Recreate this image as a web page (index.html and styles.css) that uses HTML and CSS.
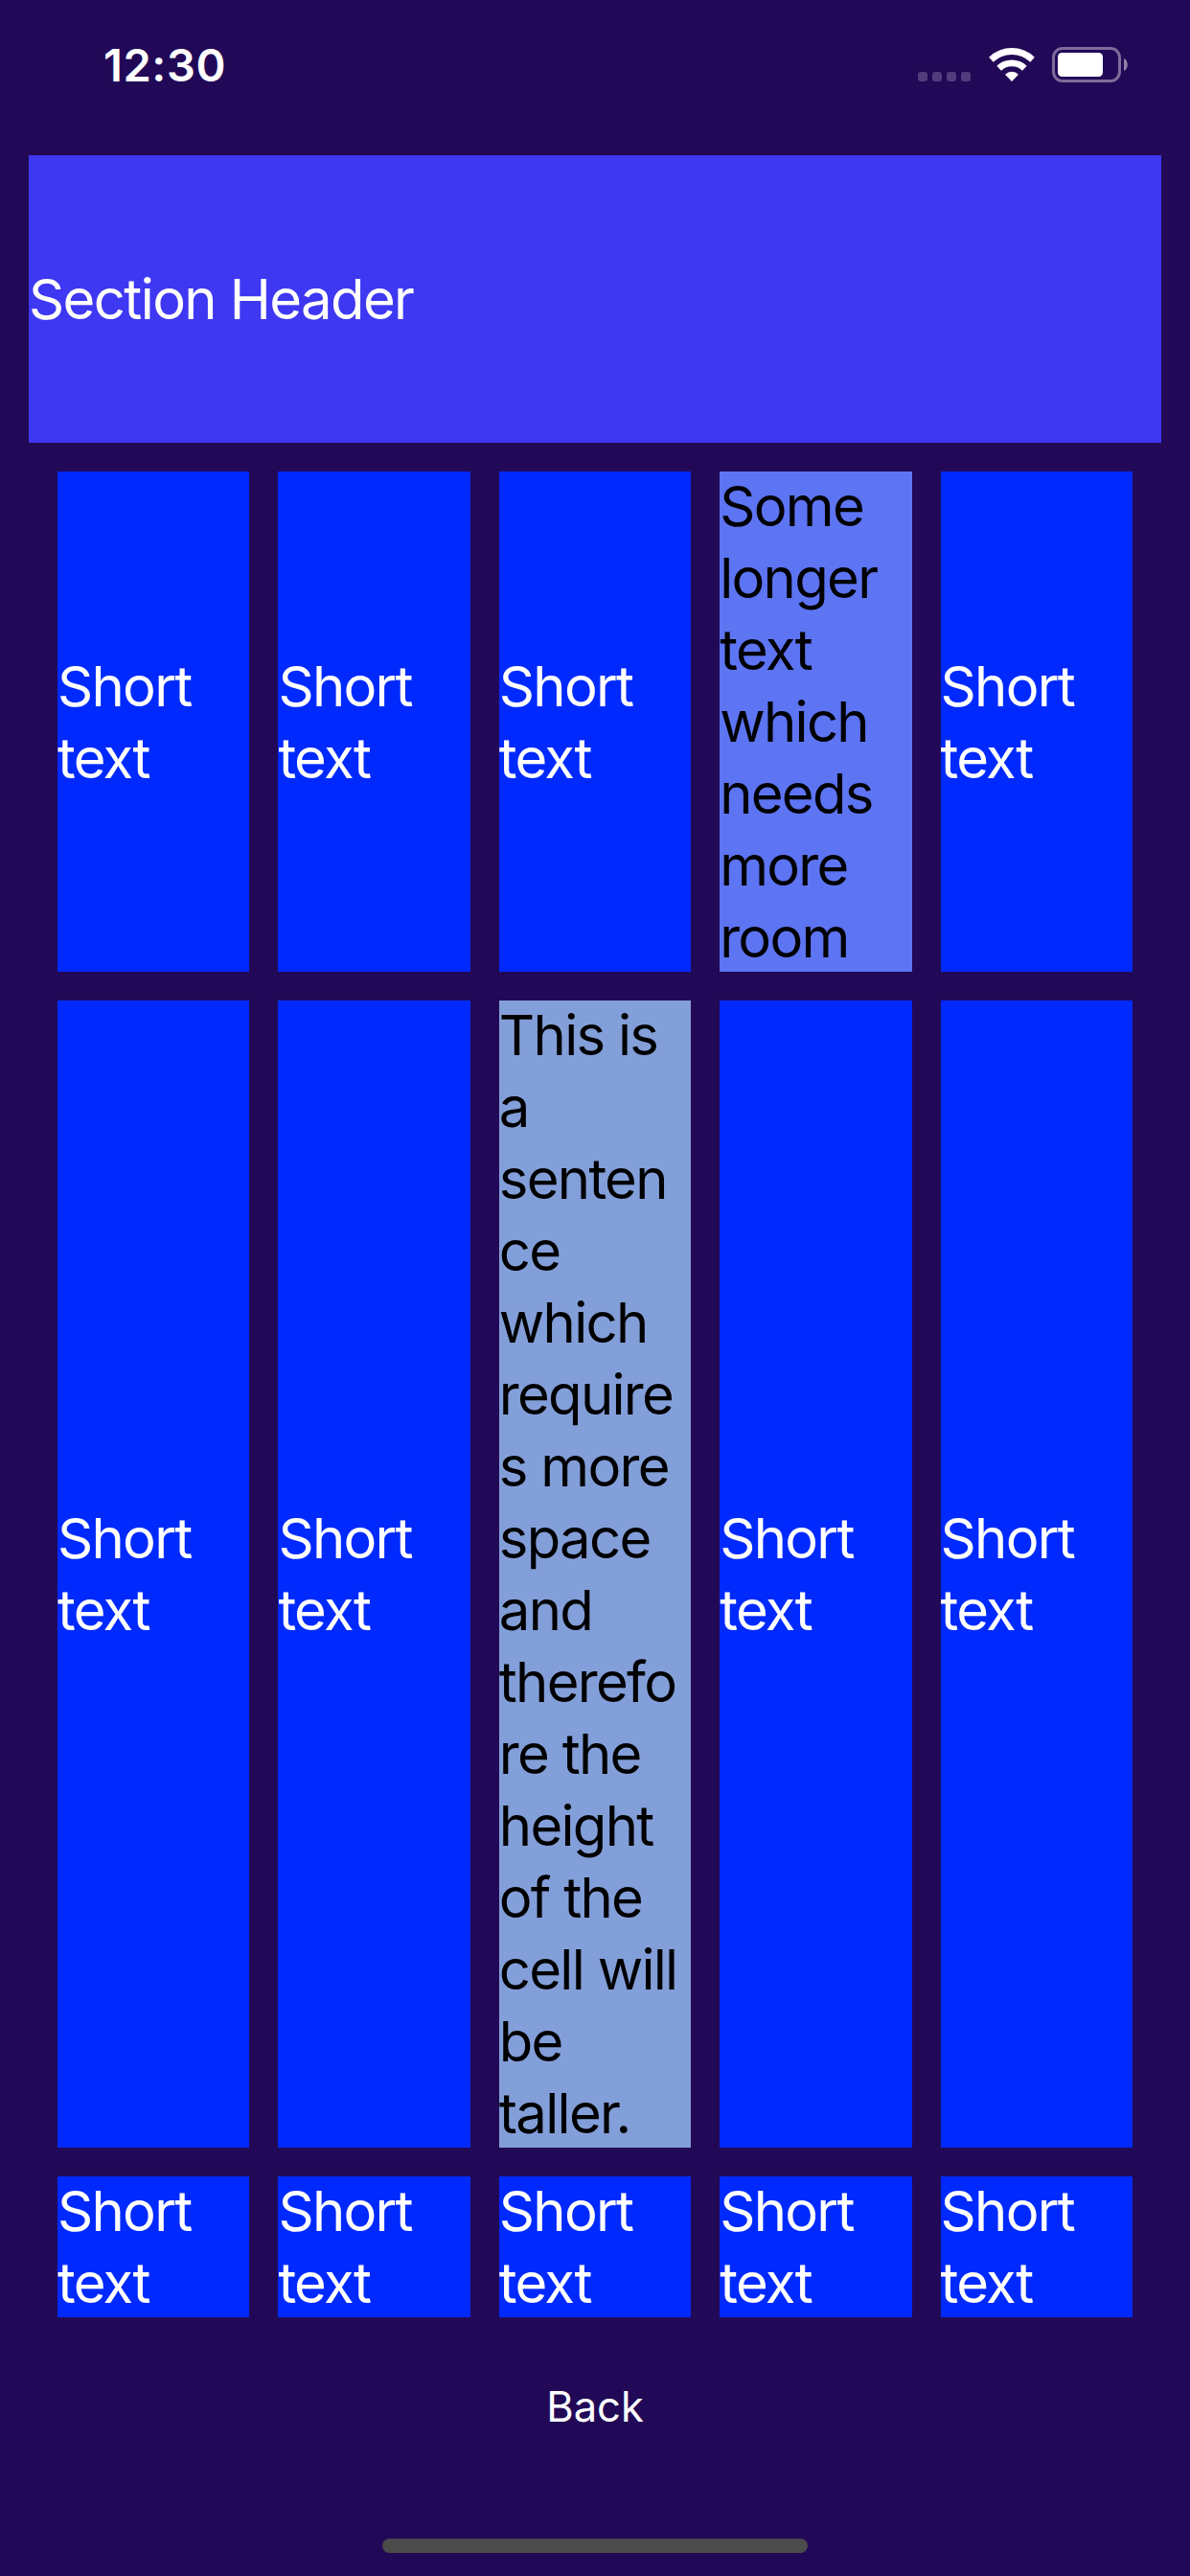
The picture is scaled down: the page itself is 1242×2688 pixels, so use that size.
FILE: index.html
```
<!DOCTYPE html>
<html lang="en">
<head>
<meta charset="utf-8">
<title>Section Header</title>
<link rel="stylesheet" href="styles.css">
</head>
<body>
<div class="screen">
  <header class="status-bar">
    <span class="time">12:30</span>
    <div class="indicators">
      <svg class="signal" viewBox="0 0 55 10" aria-hidden="true">
        <rect width="10" height="10" rx="3"/><rect x="15" width="10" height="10" rx="3"/><rect x="30" width="10" height="10" rx="3"/><rect x="45" width="10" height="10" rx="3"/>
      </svg>
      <svg class="wifi" viewBox="0 0 144 108" aria-hidden="true">
        <path d="M0.500 32A103 103 0 0 1 143.500 32L130 47A84 84 0 0 0 14 47Z"/>
        <path d="M25 59A68 68 0 0 1 119 59L105 74A48 48 0 0 0 39 74Z"/>
        <path d="M51 86A30 30 0 0 1 93 86L72 108Z"/>
      </svg>
      <svg class="battery" viewBox="0 0 79 37" aria-hidden="true">
        <rect class="battery-shell" x="1.500" y="1.500" width="69" height="34" rx="9.500"/>
        <rect class="battery-level" x="6" y="6" width="47" height="25" rx="4.500"/>
        <path class="battery-cap" d="M75 12C80 14 80 23 75 25Z"/>
      </svg>
    </div>
  </header>
  <main>
    <h1 class="section-header">Section Header</h1>
    <div class="grid">
      <div class="cell"><p>Short text</p></div>
      <div class="cell"><p>Short text</p></div>
      <div class="cell"><p>Short text</p></div>
      <div class="cell cell-medium"><p>Some longer text which needs more room</p></div>
      <div class="cell"><p>Short text</p></div>
      <div class="cell"><p>Short text</p></div>
      <div class="cell"><p>Short text</p></div>
      <div class="cell cell-long"><p>This is a sentence which requires more space and therefore the height of the cell will be taller.</p></div>
      <div class="cell"><p>Short text</p></div>
      <div class="cell"><p>Short text</p></div>
      <div class="cell"><p>Short text</p></div>
      <div class="cell"><p>Short text</p></div>
      <div class="cell"><p>Short text</p></div>
      <div class="cell"><p>Short text</p></div>
      <div class="cell"><p>Short text</p></div>
    </div>
  </main>
  <footer class="footer">
    <button class="back" type="button">Back</button>
    <div class="home-indicator"></div>
  </footer>
</div>
</body>
</html>
```

FILE: styles.css
```
* {
  box-sizing: border-box;
}

body {
  margin: 0;
  background: #220957;
  color: #fff;
  font-family: Inter, "Liberation Sans", sans-serif;
}

.screen {
  display: flex;
  flex-direction: column;
  height: 2688px;
}

.status-bar {
  display: flex;
  justify-content: space-between;
  height: 162px;
  padding: 49px 65px 0 108px;
}

.time {
  margin-top: -10px;
  font-size: 47px;
  font-weight: 600;
  letter-spacing: 0.6px;
  line-height: 57px;
}

.indicators {
  display: flex;
  align-items: flex-end;
  height: 37px;
}

.signal {
  width: 55px;
  height: 10px;
  margin: 0 18.500px 1px 0;
  fill: #533b7c;
}

.wifi {
  width: 48px;
  height: 36px;
  margin: 0 18.500px 1px 0;
  fill: #fff;
}

.battery {
  width: 79px;
  height: 37px;
}

.battery-shell {
  fill: none;
  stroke: #7e6d9b;
  stroke-width: 3;
}

.battery-level {
  fill: #fff;
}

.battery-cap {
  fill: #9183a9;
}

.section-header {
  display: flex;
  align-items: center;
  height: 300px;
  margin: 0 30px 30px;
  background: #3e38f2;
  font-size: 58px;
  font-weight: 400;
  letter-spacing: -1.6px;
  line-height: 75px;
}

.grid {
  display: grid;
  grid-template-columns: repeat(5, minmax(0, 1fr));
  gap: 30px;
  margin: 0 60px;
}

.cell {
  display: flex;
  align-items: center;
  background: #002afd;
  font-size: 58px;
  letter-spacing: -1.7px;
  line-height: 75px;
}

.cell p {
  min-width: 0;
  margin: -1px 0 -2px;
  overflow-wrap: break-word;
}

.cell-medium {
  background: #5d74f3;
  color: #000;
}

.cell-long {
  background: #839fd9;
  color: #000;
}

.footer {
  display: flex;
  flex: 1;
  flex-direction: column;
  align-items: center;
  justify-content: space-between;
  padding: 63px 0 24px;
}

.back {
  padding: 0;
  border: 0;
  background: none;
  color: inherit;
  font: 400 43.500px/60px Inter, "Liberation Sans", sans-serif;
}

.home-indicator {
  width: 444px;
  height: 15px;
  border-radius: 8px;
  background: #4b4b4b;
}
```
